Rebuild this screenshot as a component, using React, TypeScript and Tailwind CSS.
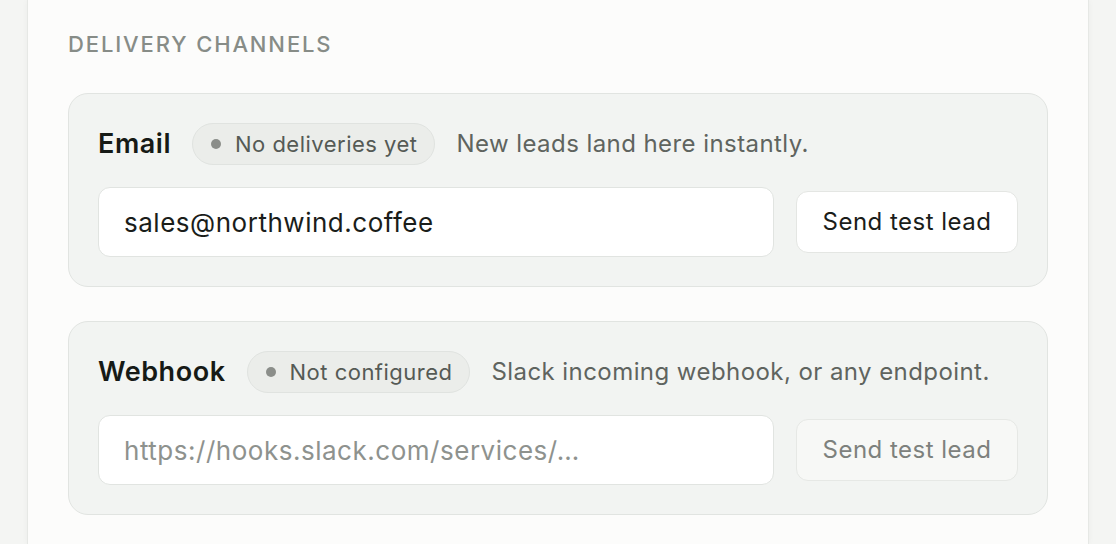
export default function App() {
  const font = { fontFamily: "Inter, 'Noto Sans', sans-serif" };

  return (
    <div className="min-h-screen w-full bg-[#f4f5f3]" style={font}>
      <div className="mx-[27px] min-h-[544px] border-x border-[#e6e8e5] bg-[#fcfcfb] px-[40px] pt-[30px] shadow-[0_0_6px_rgba(0,0,0,0.04)]">
        <h3 className="text-[22px] font-medium uppercase leading-[28px] tracking-[0.085em] text-[#878c87]">
          Delivery Channels
        </h3>

        <div className="mt-[35px] flex flex-col gap-[34px]">
          <Channel
            title="Email"
            status="No deliveries yet"
            hint="New leads land here instantly."
            value="sales@northwind.coffee"
          />
          <Channel
            title="Webhook"
            status="Not configured"
            hint="Slack incoming webhook, or any endpoint."
            placeholder="https://hooks.slack.com/services/…"
            disabled
          />
        </div>
      </div>
    </div>
  );
}

function Channel({
  title,
  status,
  hint,
  value,
  placeholder,
  disabled,
}: {
  title: string;
  status: string;
  hint: string;
  value?: string;
  placeholder?: string;
  disabled?: boolean;
}) {
  return (
    <div className="rounded-[20px] border border-[#e1e4e1] bg-[#f2f4f2] p-[29px]">
      {/* Header */}
      <div className="flex h-[42px] items-center">
        <span className="text-[27px] font-semibold tracking-[0.02em] text-[#161a16]">{title}</span>
        <span className="ml-[21px] flex h-[42px] items-center gap-[14px] rounded-full border border-[#e0e3e0] bg-[#ebedea] pl-[18px] pr-[17px] text-[22px] tracking-[0.022em] text-[#555a55]">
          <span className="h-[10px] w-[10px] rounded-full bg-[#8b8e8a]" />
          {status}
        </span>
        <span className="ml-[21px] text-[24px] tracking-[0.018em] text-[#5f645f]">{hint}</span>
      </div>

      {/* Input row */}
      <div className="mt-[22px] flex items-center gap-[22px]">
        <input
          type="text"
          defaultValue={value}
          placeholder={placeholder}
          className="h-[70px] flex-1 rounded-[12px] border border-[#e1e4e1] bg-white px-[25px] text-[26px] tracking-[0.02em] text-[#1a1d1a] placeholder:text-[#8e928e] focus:outline-none"
          style={{ fontFamily: "Inter, 'Noto Sans', sans-serif" }}
        />
        <button
          type="button"
          className={
            disabled
              ? "h-[62px] w-[222px] rounded-[12px] border border-[#e6e8e5] bg-[#f7f8f6] text-[24px] tracking-[0.02em] text-[#7d817d]"
              : "h-[62px] w-[222px] rounded-[12px] border border-[#e4e6e3] bg-white text-[24px] tracking-[0.02em] text-[#1a1d1a]"
          }
          style={{ fontFamily: "Inter, 'Noto Sans', sans-serif" }}
        >
          Send test lead
        </button>
      </div>
    </div>
  );
}
